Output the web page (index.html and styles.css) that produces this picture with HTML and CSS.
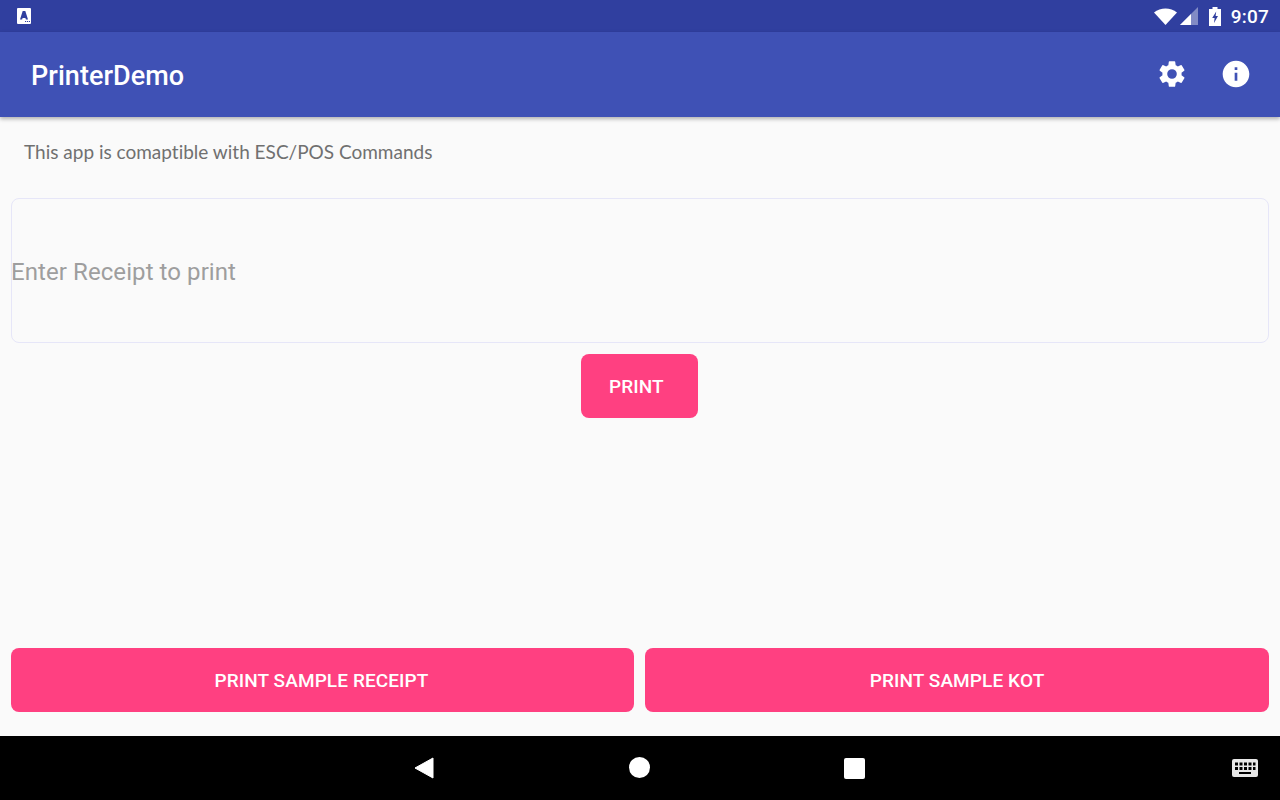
FILE: index.html
```html
<!DOCTYPE html>
<html lang="en">
<head>
    <meta charset="UTF-8">
    <title>PrinterDemo</title>
    <link rel="stylesheet" href="styles.css">
</head>
<body>
    <div class="status-bar">
        <svg class="status-app" width="14" height="16" viewBox="0 0 14 16">
            <rect width="14" height="16" rx="1" fill="#fff"/>
            <path d="M5.700 3 H8.300 L11 11.500 H8.900 L8.400 10 H5.600 L5.100 11.500 H3 Z" fill="#303f9f"/>
            <path d="M8 13.500h1.200M10 13.500h1.200M12 13.500h1" stroke="#303f9f" stroke-width="1"/>
        </svg>
        <div class="status-right">
            <svg width="23" height="17" viewBox="0 0 23 17"><path d="M0 4.500 C6.500 -1 16.500 -1 23 4.500 L11.500 17 Z" fill="#fff"/></svg>
            <svg class="signal" width="18" height="18" viewBox="0 0 18 18">
                <path d="M0 18 L18 0 V18 Z" fill="#fff" fill-opacity="0.4"/>
                <path d="M0 18 L11 7 V18 Z" fill="#fff"/>
            </svg>
            <svg class="battery" width="12" height="19" viewBox="0 0 12 19">
                <path d="M3.500 0 H8.500 V2 H12 V19 H0 V2 H3.500 Z" fill="#fff"/>
                <path d="M7.200 4.500 L3.200 11 H5.600 L5 16 L9 9 H6.600 Z" fill="#303f9f"/>
            </svg>
            <span class="clock">9:07</span>
        </div>
    </div>

    <header class="app-bar">
        <h1 class="app-title">PrinterDemo</h1>
        <div class="app-actions">
            <svg width="32" height="32" viewBox="0 0 24 24"><path fill="#fff" d="M19.140 12.940c.04-.3.06-.61.06-.94s-.02-.64-.07-.94l2.030-1.580a.49.49 0 0 0 .12-.61l-1.920-3.320a.49.49 0 0 0-.59-.22l-2.390.96c-.5-.38-1.030-.7-1.620-.94l-.36-2.540a.48.48 0 0 0-.48-.41h-3.840a.47.47 0 0 0-.47.41l-.36 2.540c-.59.24-1.130.57-1.620.94l-2.390-.96a.48.48 0 0 0-.59.22L2.740 8.870a.47.47 0 0 0 .12.61l2.030 1.580c-.05.3-.09.63-.09.94s.02.64.07.94l-2.030 1.580a.49.49 0 0 0-.12.61l1.920 3.320c.12.22.37.29.59.22l2.390-.96c.5.38 1.030.7 1.620.94l.36 2.540c.05.24.24.41.48.41h3.840c.24 0 .44-.17.47-.41l.36-2.540c.59-.24 1.130-.56 1.620-.94l2.390.96c.22.08.47 0 .59-.22l1.920-3.320a.47.47 0 0 0-.12-.61l-2.010-1.580zM12 15.600A3.600 3.600 0 1 1 12 8.400a3.600 3.600 0 0 1 0 7.200z"/></svg>
            <svg width="32" height="32" viewBox="0 0 24 24"><path fill="#fff" d="M12 2C6.480 2 2 6.480 2 12s4.480 10 10 10 10-4.480 10-10S17.520 2 12 2zm1 15h-2v-6h2v6zm0-8h-2V7h2v2z"/></svg>
        </div>
    </header>

    <main class="content">
        <p class="hint">This app is comaptible with ESC/POS Commands</p>
        <div class="receipt-box">Enter Receipt to print</div>
        <div class="print-row">
            <button class="btn btn-print">PRINT</button>
        </div>
        <div class="sample-row">
            <button class="btn btn-receipt">PRINT SAMPLE RECEIPT</button>
            <button class="btn">PRINT SAMPLE KOT</button>
        </div>
    </main>

    <nav class="nav-bar">
        <svg class="nav-back" width="20" height="22" viewBox="0 0 20 22"><path d="M19 1 V21 L1 11 Z" fill="#fff" stroke="#fff" stroke-width="1" stroke-linejoin="round"/></svg>
        <span class="nav-home"></span>
        <span class="nav-recent"></span>
        <svg class="nav-keyboard" width="26" height="18" viewBox="0 0 26 18">
            <rect width="26" height="18" rx="2" fill="#e8e8e8"/>
            <path d="M3 3.500h3v3H3zM7.500 3.500h3v3h-3zM12 3.500h3v3h-3zM16.500 3.500h3v3h-3zM21 3.500h2.500v3H21zM3 8h3v3H3zM7.500 8h3v3h-3zM12 8h3v3h-3zM16.500 8h3v3h-3zM21 8h2.500v3H21zM7 13h12v2H7z" fill="#000"/>
        </svg>
    </nav>
</body>
</html>
```

FILE: styles.css
```css
* {
    box-sizing: border-box;
}
html, body {
    margin: 0;
    padding: 0;
}
body {
    width: 1280px;
    height: 800px;
    display: flex;
    flex-direction: column;
    overflow: hidden;
    background-color: #fafafa;
    font-family: Roboto, sans-serif;
}
.status-bar {
    height: 32px;
    background-color: #303f9f;
    display: flex;
    align-items: center;
    justify-content: space-between;
    padding: 0 11px 0 17px;
    flex-shrink: 0;
}
.status-right {
    display: flex;
    align-items: center;
}
.signal {
    margin-left: 3px;
}
.battery {
    margin-left: 11px;
}
.clock {
    margin-left: 10px;
    color: #fff;
    font-size: 19px;
    font-weight: 500;
    letter-spacing: 0.2px;
}
.app-bar {
    height: 85px;
    background-color: #3f51b5;
    display: flex;
    align-items: center;
    justify-content: space-between;
    padding: 0 28px 0 31px;
    box-shadow: 0 2px 4px rgba(0, 0, 0, 0.3);
    flex-shrink: 0;
    position: relative;
}
.app-title {
    margin: 2px 0 0;
    color: #fff;
    font-size: 27px;
    font-weight: 500;
    letter-spacing: 0.05px;
}
.app-actions {
    display: flex;
    align-items: center;
    gap: 32px;
    margin-bottom: 1px;
}
.content {
    flex: 1;
    display: flex;
    flex-direction: column;
    padding: 0 11px 24px;
}
.hint {
    margin: 23px 0 0 13px;
    color: #707070;
    font-family: Lato, sans-serif;
    font-size: 19px;
    line-height: 24px;
    font-variant-ligatures: none;
}
.receipt-box {
    margin-top: 34px;
    height: 145px;
    display: flex;
    align-items: center;
    padding-top: 2px;
    border: 1px solid #e6e6f8;
    border-radius: 8px;
    color: #9e9e9e;
    font-size: 24px;
    letter-spacing: 0.08px;
    text-indent: -1px;
}
.print-row {
    margin-top: 11px;
    display: flex;
    justify-content: center;
}
.btn {
    height: 64px;
    border: none;
    border-radius: 8px;
    background-color: #ff4081;
    color: #fff;
    font-family: Roboto, sans-serif;
    font-size: 19px;
    font-weight: 500;
    letter-spacing: 0.1px;
}
.btn-print {
    width: 117px;
    margin-right: 1px;
    padding: 0 34px 0 28px;
    text-align: left;
}
.btn-receipt {
    padding-right: 8px;
}
.sample-row {
    margin-top: auto;
    display: grid;
    grid-template-columns: 623px 624px;
    gap: 11px;
}
.nav-bar {
    height: 64px;
    background-color: #000;
    flex-shrink: 0;
    display: flex;
    align-items: center;
}
.nav-back {
    margin-left: 414px;
}
.nav-home {
    width: 21px;
    height: 21px;
    margin-left: 195px;
    margin-bottom: 1px;
    border-radius: 50%;
    background-color: #fff;
}
.nav-recent {
    width: 21px;
    height: 21px;
    margin-left: 194px;
    border-radius: 2px;
    background-color: #fff;
}
.nav-keyboard {
    margin-left: auto;
    margin-right: 22px;
}
```
